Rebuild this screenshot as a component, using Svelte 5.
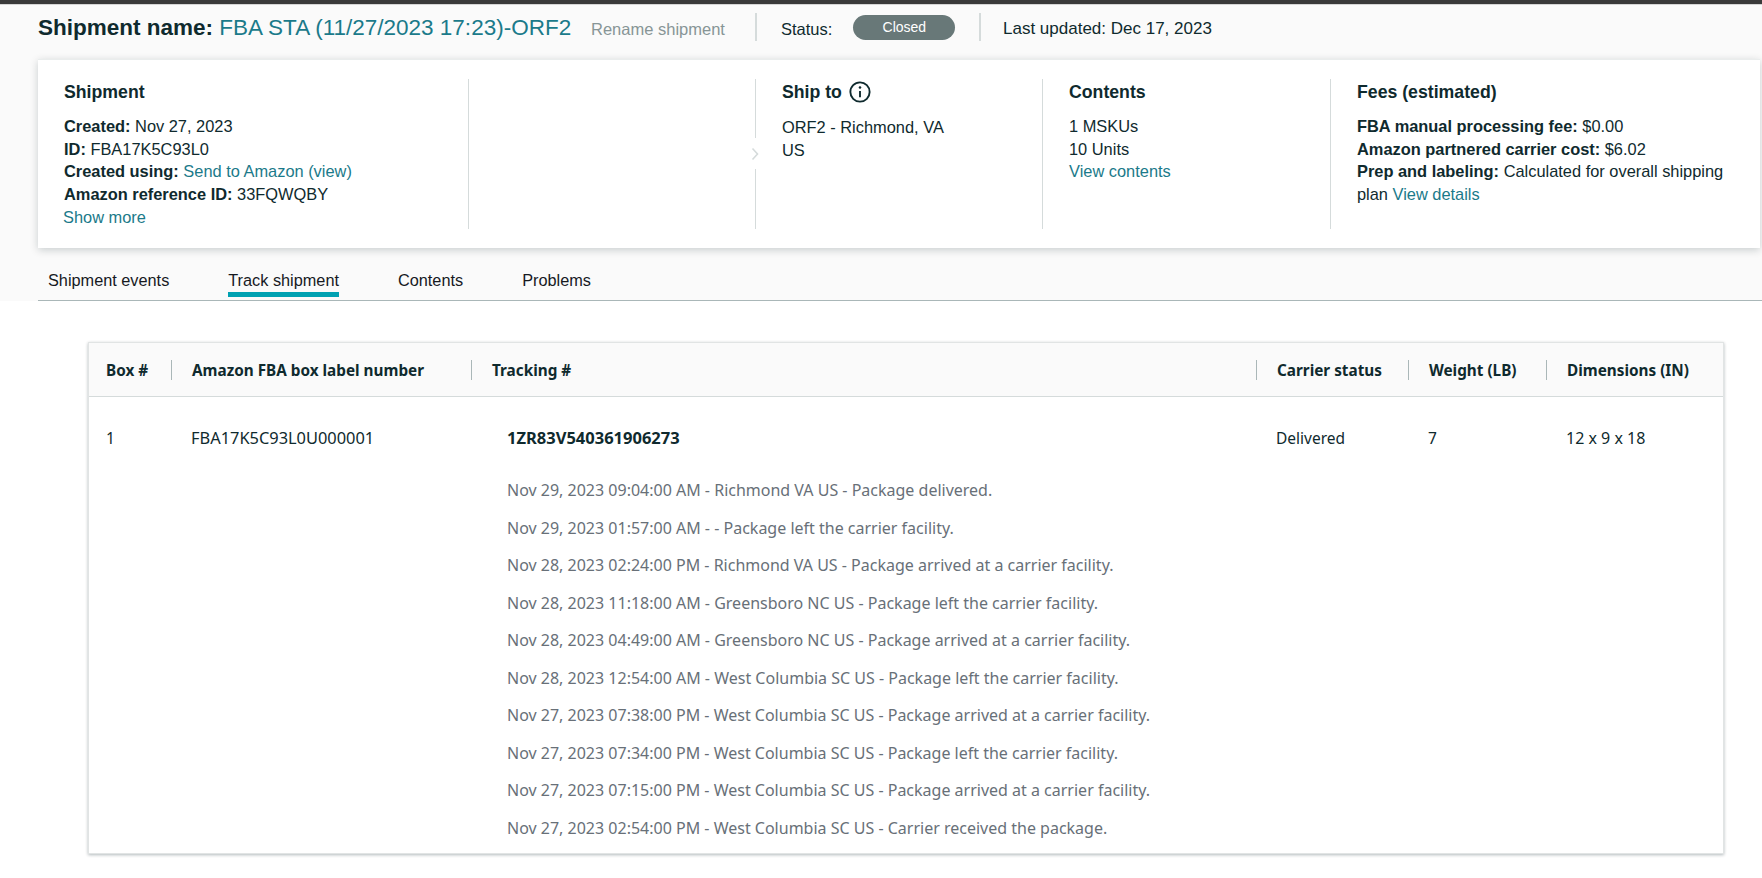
<script>
	const events = [
		'Nov 29, 2023 09:04:00 AM - Richmond VA US - Package delivered.',
		'Nov 29, 2023 01:57:00 AM - - Package left the carrier facility.',
		'Nov 28, 2023 02:24:00 PM - Richmond VA US - Package arrived at a carrier facility.',
		'Nov 28, 2023 11:18:00 AM - Greensboro NC US - Package left the carrier facility.',
		'Nov 28, 2023 04:49:00 AM - Greensboro NC US - Package arrived at a carrier facility.',
		'Nov 28, 2023 12:54:00 AM - West Columbia SC US - Package left the carrier facility.',
		'Nov 27, 2023 07:38:00 PM - West Columbia SC US - Package arrived at a carrier facility.',
		'Nov 27, 2023 07:34:00 PM - West Columbia SC US - Package left the carrier facility.',
		'Nov 27, 2023 07:15:00 PM - West Columbia SC US - Package arrived at a carrier facility.',
		'Nov 27, 2023 02:54:00 PM - West Columbia SC US - Carrier received the package.'
	];

	const tabs = ['Shipment events', 'Track shipment', 'Contents', 'Problems'];
	const columns = ['Box #', 'Amazon FBA box label number', 'Tracking #', 'Carrier status', 'Weight (LB)', 'Dimensions (IN)'];
</script>

<div class="page">
	<div class="topbar"></div>

	<section class="summary">
		<header class="title-row">
			<h1><b>Shipment name:</b> <span class="link">FBA STA (11/27/2023 17:23)-ORF2</span></h1>
			<span class="rename">Rename shipment</span>
			<span class="status"><span>Status:</span><span class="pill">Closed</span></span>
			<span class="updated">Last updated: Dec 17, 2023</span>
		</header>

		<div class="card">
			<div class="col col-shipment">
				<h2>Shipment</h2>
				<p><b>Created:</b> Nov 27, 2023</p>
				<p><b>ID:</b> FBA17K5C93L0</p>
				<p><b>Created using:</b> <span class="link">Send to Amazon (view)</span></p>
				<p><b>Amazon reference ID:</b> 33FQWQBY</p>
				<p class="link more">Show more</p>
			</div>
			<div class="col col-empty"></div>
			<div class="col col-ship">
				<span class="chevron">
					<svg width="10" height="14" viewBox="0 0 10 14"><path d="M2.5 1.5 7.5 7l-5 5.500" fill="none" stroke="#d5dbdb" stroke-width="1.600" /></svg>
				</span>
				<h2 class="ship-head">
					Ship to
					<svg width="22" height="22" viewBox="0 0 21 21"><circle cx="10.500" cy="10.500" r="9.200" fill="none" stroke="#0f2a2e" stroke-width="1.800" /><circle cx="10.500" cy="6.300" r="1.200" fill="#0f2a2e" /><path d="M10.500 9.500v6" stroke="#0f2a2e" stroke-width="1.800" /></svg>
				</h2>
				<p>ORF2 - Richmond, VA</p>
				<p>US</p>
			</div>
			<div class="col col-contents">
				<h2>Contents</h2>
				<p>1 MSKUs</p>
				<p>10 Units</p>
				<p class="link">View contents</p>
			</div>
			<div class="col col-fees">
				<h2>Fees (estimated)</h2>
				<p><b>FBA manual processing fee:</b> $0.00</p>
				<p><b>Amazon partnered carrier cost:</b> $6.02</p>
				<p><b>Prep and labeling:</b> Calculated for overall shipping plan <span class="link">View details</span></p>
			</div>
		</div>

		<nav class="tabs">
			{#each tabs as tab, i}
				<span class="tab" class:active={i === 1}>{tab}</span>
			{/each}
		</nav>
	</section>

	<section class="table">
		<div class="grid head">
			{#each columns as column}
				<div class="th">{column}</div>
			{/each}
		</div>
		<div class="grid body">
			<div class="td">1</div>
			<div class="td label">FBA17K5C93L0U000001</div>
			<div class="td tracking">
				<div class="number">1ZR83V540361906273</div>
				{#each events as event}
					<div class="event">{event}</div>
				{/each}
			</div>
			<div class="td carrier">Delivered</div>
			<div class="td weight">7</div>
			<div class="td dims">12 x 9 x 18</div>
		</div>
	</section>
</div>

<style>
	:global(body) {
		margin: 0;
		background: #fff;
	}

	.page {
		width: 1762px;
		height: 878px;
		overflow: hidden;
		font-family: 'Liberation Sans', Arial, sans-serif;
		color: #0f2a2e;
	}

	.topbar {
		height: 4px;
		background: #3a3a3a;
		border-bottom: 1px solid #d5d5d5;
	}

	.summary {
		height: 296px;
		background: #fafafa;
		padding-left: 38px;
		display: flex;
		flex-direction: column;
	}

	.title-row {
		height: 54px;
		display: flex;
		align-items: flex-start;
		font-size: 16.500px;
		box-sizing: border-box;
		padding-top: 8px;
	}

	h1 {
		margin: 1px 0 0;
		font-size: 22.500px;
		line-height: 28px;
		font-weight: 400;
		white-space: nowrap;
		width: 553px;
	}

	.rename {
		color: #879596;
		line-height: 32px;
		width: 164px;
	}

	.status {
		display: flex;
		align-items: flex-start;
		gap: 21px;
		height: 28px;
		line-height: 32px;
		border-left: 2px solid #d5dbdb;
		border-right: 2px solid #d5dbdb;
		padding-left: 24px;
		width: 198px;
		box-sizing: content-box;
	}

	.pill {
		width: 102px;
		height: 25px;
		margin-top: 2px;
		line-height: 24px;
		border-radius: 13px;
		background: #687878;
		color: #fff;
		font-size: 14px;
		text-align: center;
	}

	.updated {
		font-size: 17px;
		line-height: 32px;
		padding-left: 22px;
	}

	.link {
		color: #1b7a8a;
	}

	.card {
		height: 189px;
		background: #fff;
		border-top: 1px solid #eaeded;
		box-sizing: border-box;
		margin-right: 2px;
		box-shadow: 0 2px 8px rgba(0, 28, 36, 0.2);
		display: flex;
		padding: 19px 0;
		font-size: 16.400px;
		line-height: 22.700px;
	}

	.col {
		box-sizing: border-box;
		padding-left: 26px;
		height: 150px;
	}

	.col + .col {
		border-left: 1px solid #d5dbdb;
	}

	.col-shipment {
		width: 430px;
	}

	.col-empty {
		width: 287px;
	}

	.col-ship {
		width: 287px;
		position: relative;
	}

	.col-contents {
		width: 288px;
	}

	.col-fees {
		width: 429px;
		padding-right: 20px;
	}

	h2 {
		margin: 0 0 10px;
		font-size: 17.700px;
		line-height: 26px;
		font-weight: 700;
	}

	p {
		margin: 0;
		white-space: normal;
	}

	.more {
		margin-left: -1px;
	}

	.ship-head {
		display: flex;
		align-items: center;
		gap: 7px;
		margin-bottom: 11px;
	}

	.chevron {
		position: absolute;
		left: -6px;
		top: 59px;
		height: 31px;
		width: 10px;
		background: #fff;
		display: flex;
		align-items: center;
	}

	.tabs {
		flex: 1;
		display: flex;
		gap: 59px;
		padding-left: 10px;
		font-size: 16.300px;
		border-bottom: 1px solid #aab7b8;
	}

	.tab {
		box-sizing: border-box;
		height: 49px;
		padding-top: 22px;
		line-height: 20px;
		color: #16191f;
		border-bottom: 5px solid transparent;
	}

	.tab.active {
		border-bottom-color: #00a1b2;
	}

	.table {
		margin: 41px 0 0 88px;
		width: 1636px;
		height: 512px;
		box-sizing: border-box;
		border: 1px solid #e1e4e4;
		box-shadow: 0 1px 3px rgba(0, 28, 36, 0.3);
		font-family: 'Noto Sans', 'Open Sans', sans-serif;
		font-size: 15.500px;
	}

	.grid {
		display: grid;
		grid-template-columns: 82px 300px 785px 152px 138px 1fr;
	}

	.head {
		height: 54px;
		background: #fafafa;
		border-bottom: 1px solid #d5dbdb;
		box-sizing: border-box;
		align-items: center;
	}

	.th {
		font-weight: 700;
		font-size: 15.300px;
		line-height: 20px;
		padding-left: 20px;
		border-left: 1px solid #aab7b8;
		white-space: nowrap;
	}

	.th:first-child {
		border-left: none;
		padding-left: 17px;
	}

	.body {
		padding-top: 30px;
	}

	.td {
		padding-left: 20px;
		line-height: 22px;
	}

	.td:first-child {
		padding-left: 17px;
	}

	.label {
		font-size: 16.400px;
		white-space: nowrap;
	}

	.tracking {
		padding-left: 36px;
	}

	.number {
		font-size: 16.500px;
		font-weight: 700;
		margin-bottom: 26px;
	}

	.dims {
		font-size: 16px;
	}

	.event {
		font-size: 16px;
		color: #687078;
		height: 37.500px;
		line-height: 30px;
		white-space: nowrap;
	}
</style>
